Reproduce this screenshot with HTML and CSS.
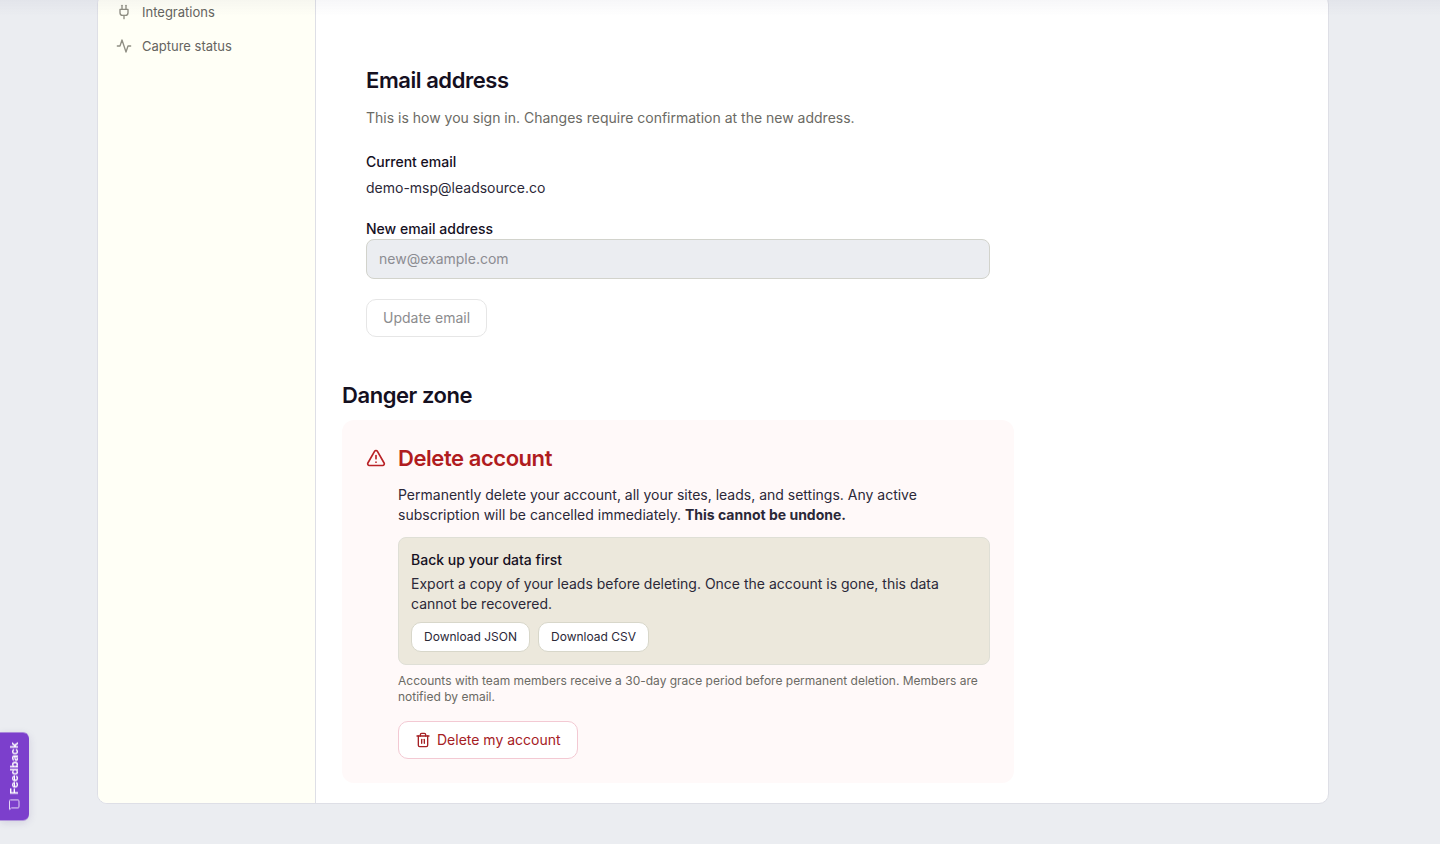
FILE: index.html
```html
<!DOCTYPE html>
<html lang="en">

<head>
    <meta charset="UTF-8">
    <meta name="viewport" content="width=device-width, initial-scale=1.0">
    <title>Account settings</title>
    <link rel="stylesheet" href="styles.css">
</head>

<body>
    <div class="header-shadow"></div>

    <div class="page">
        <div class="panel">
            <nav class="sidebar">
                <a href="#integrations" class="nav-item">
                    <svg class="icon" viewBox="0 0 24 24">
                        <path d="M12 22v-5" />
                        <path d="M9 8V2" />
                        <path d="M15 8V2" />
                        <path d="M18 8v5a4 4 0 0 1-4 4h-4a4 4 0 0 1-4-4V8Z" />
                    </svg>
                    Integrations
                </a>
                <a href="#capture" class="nav-item">
                    <svg class="icon" viewBox="0 0 24 24">
                        <path d="M22 12h-4l-3 9L9 3l-3 9H2" />
                    </svg>
                    Capture status
                </a>
            </nav>

            <main class="content">
                <section class="card">
                    <h2>Email address</h2>
                    <p class="description">This is how you sign in. Changes require confirmation at the new address.</p>

                    <div class="current">
                        <p class="label">Current email</p>
                        <p class="value">demo-msp@leadsource.co</p>
                    </div>

                    <form class="email-form">
                        <label class="label" for="new-email">New email address</label>
                        <input type="email" id="new-email" placeholder="new@example.com">
                        <button type="submit" class="btn" disabled>Update email</button>
                    </form>
                </section>

                <h2 class="danger-heading">Danger zone</h2>

                <section class="card danger-card">
                    <svg class="icon warning-icon" viewBox="0 0 24 24">
                        <path d="m21.73 18-8-14a2 2 0 0 0-3.48 0l-8 14A2 2 0 0 0 4 21h16a2 2 0 0 0 1.73-3" />
                        <path d="M12 9v4" />
                        <path d="M12 17h.01" />
                    </svg>
                    <div class="danger-body">
                        <h2>Delete account</h2>
                        <p class="danger-text">Permanently delete your account, all your sites, leads, and settings. Any active subscription will be cancelled immediately. <strong>This cannot be undone.</strong></p>

                        <div class="backup">
                            <p class="label">Back up your data first</p>
                            <p class="backup-text">Export a copy of your leads before deleting. Once the account is gone, this data cannot be recovered.</p>
                            <div class="backup-buttons">
                                <button type="button" class="btn btn-small">Download JSON</button>
                                <button type="button" class="btn btn-small">Download CSV</button>
                            </div>
                        </div>

                        <p class="note">Accounts with team members receive a 30-day grace period before permanent deletion. Members are notified by email.</p>

                        <button type="button" class="btn btn-danger">
                            <svg class="icon" viewBox="0 0 24 24">
                                <path d="M3 6h18" />
                                <path d="M19 6v14a2 2 0 0 1-2 2H7a2 2 0 0 1-2-2V6" />
                                <path d="M8 6V4a2 2 0 0 1 2-2h4a2 2 0 0 1 2 2v2" />
                                <path d="M10 11v6" />
                                <path d="M14 11v6" />
                            </svg>
                            Delete my account
                        </button>
                    </div>
                </section>
            </main>
        </div>
    </div>

    <button type="button" class="feedback">
        <svg class="icon" viewBox="0 0 24 24">
            <path d="M22 17a2 2 0 0 1-2 2H7l-4 3V5a2 2 0 0 1 2-2h15a2 2 0 0 1 2 2z" />
        </svg>
        Feedback
    </button>
</body>

</html>
```

FILE: styles.css
```css
* {
    box-sizing: border-box;
}

body {
    margin: 0;
    background: #ebedf1;
    color: #2b2838;
    font-family: Inter, "Liberation Sans", sans-serif;
    font-size: 14px;
    line-height: 20px;
    overflow: hidden;
}

h2,
p {
    margin: 0;
}

h2 {
    color: #15101f;
    font-size: 22px;
    font-weight: 600;
    line-height: 28px;
    letter-spacing: -0.02em;
}

button,
input {
    font-family: inherit;
    font-size: 14px;
    line-height: 20px;
}

.icon {
    width: 16px;
    height: 16px;
    flex-shrink: 0;
    fill: none;
    stroke: currentColor;
    stroke-width: 2;
    stroke-linecap: round;
    stroke-linejoin: round;
}

/* shadow under the top bar */
.header-shadow {
    position: fixed;
    top: 0;
    left: 0;
    right: 0;
    height: 16px;
    background: linear-gradient(rgba(40, 40, 90, 0.04), rgba(40, 40, 90, 0));
    pointer-events: none;
    z-index: 5;
}

.page {
    padding: 0 111px 40px 97px;
}

.panel {
    display: flex;
    max-width: 1232px;
    margin: -6px auto 0;
    background: #fff;
    border: 1px solid #dedfe6;
    border-radius: 10px;
    overflow: hidden;
}

/* sidebar */
.sidebar {
    width: 218px;
    flex-shrink: 0;
    padding: 0 8px;
    background: #fffff6;
    border-right: 1px solid #dedfe6;
}

.nav-item {
    display: flex;
    align-items: center;
    gap: 10px;
    padding: 7px 10px;
    color: #65645f;
    font-size: 13px;
    text-decoration: none;
}

.nav-item .icon {
    color: #8f8e83;
}

/* content */
.content {
    flex: 1;
    min-width: 0;
    padding: 47px 26px 20px;
}

.card {
    max-width: 672px;
    padding: 24px;
    border-radius: 12px;
}

.description {
    margin-top: 14px;
    color: #6b6a64;
}

.label {
    color: #15101f;
    font-weight: 500;
}

.current {
    display: flex;
    flex-direction: column;
    gap: 6px;
    margin-top: 24px;
}

.email-form {
    display: flex;
    flex-direction: column;
    align-items: flex-start;
    margin-top: 21px;
}

.email-form input {
    width: 100%;
    height: 40px;
    margin-bottom: 20px;
    padding: 8px 12px 10px;
    background: #ebedf1;
    border: 1px solid #d2d3cc;
    border-radius: 8px;
}

.email-form input::placeholder {
    color: #8b8c92;
}

.btn {
    display: inline-flex;
    align-items: center;
    gap: 6px;
    padding: 8px 16px;
    background: #fff;
    border: 1px solid #d8d7ca;
    border-radius: 10px;
    color: #2b2838;
    cursor: pointer;
}

.btn:disabled {
    border-color: #e6e6e6;
    color: #8c8c8e;
    cursor: default;
}

/* danger zone */
.danger-heading {
    margin: 20px 0 11px;
}

.danger-card {
    display: flex;
    gap: 12px;
    background: #fff9f9;
}

.danger-card h2 {
    color: #b01c20;
}

.warning-icon {
    width: 20px;
    height: 20px;
    margin-top: 4px;
    color: #b92226;
}

.danger-body {
    flex: 1;
    min-width: 0;
}

.danger-text {
    margin: 13px 0 12px;
}

.backup {
    padding: 12px;
    background: #ece8dc;
    border: 1px solid #dfdfd6;
    border-radius: 8px;
}

.backup-text {
    margin-top: 4px;
}

.backup-buttons {
    display: flex;
    gap: 8px;
    margin-top: 8px;
}

.btn-small {
    padding: 4px 12px;
    font-size: 12px;
}

.note {
    margin: 8px 0 16px;
    color: #6b6a64;
    font-size: 12px;
    line-height: 16px;
}

.btn-danger {
    border-color: #f3c9d3;
    color: #a52024;
}

/* feedback tab on the left edge */
.feedback {
    position: fixed;
    left: 0;
    bottom: 24px;
    display: flex;
    align-items: center;
    gap: 4px;
    width: 29px;
    padding: 10px 0;
    background: #7c3fcc;
    border: none;
    border-radius: 6px 0 0 6px;
    box-shadow: 0 -2px 8px rgba(60, 40, 120, 0.15);
    color: #fff;
    font-size: 11px;
    font-weight: 700;
    writing-mode: vertical-rl;
    transform: rotate(180deg);
    cursor: pointer;
}

/* keeps the bubble upright inside the rotated tab */
.feedback .icon {
    width: 12px;
    height: 12px;
    opacity: 0.8;
    transform: rotate(180deg);
}

@media (max-width: 900px) {
    .page {
        padding: 0 16px 40px;
    }

    .sidebar {
        width: 160px;
    }
}
```
